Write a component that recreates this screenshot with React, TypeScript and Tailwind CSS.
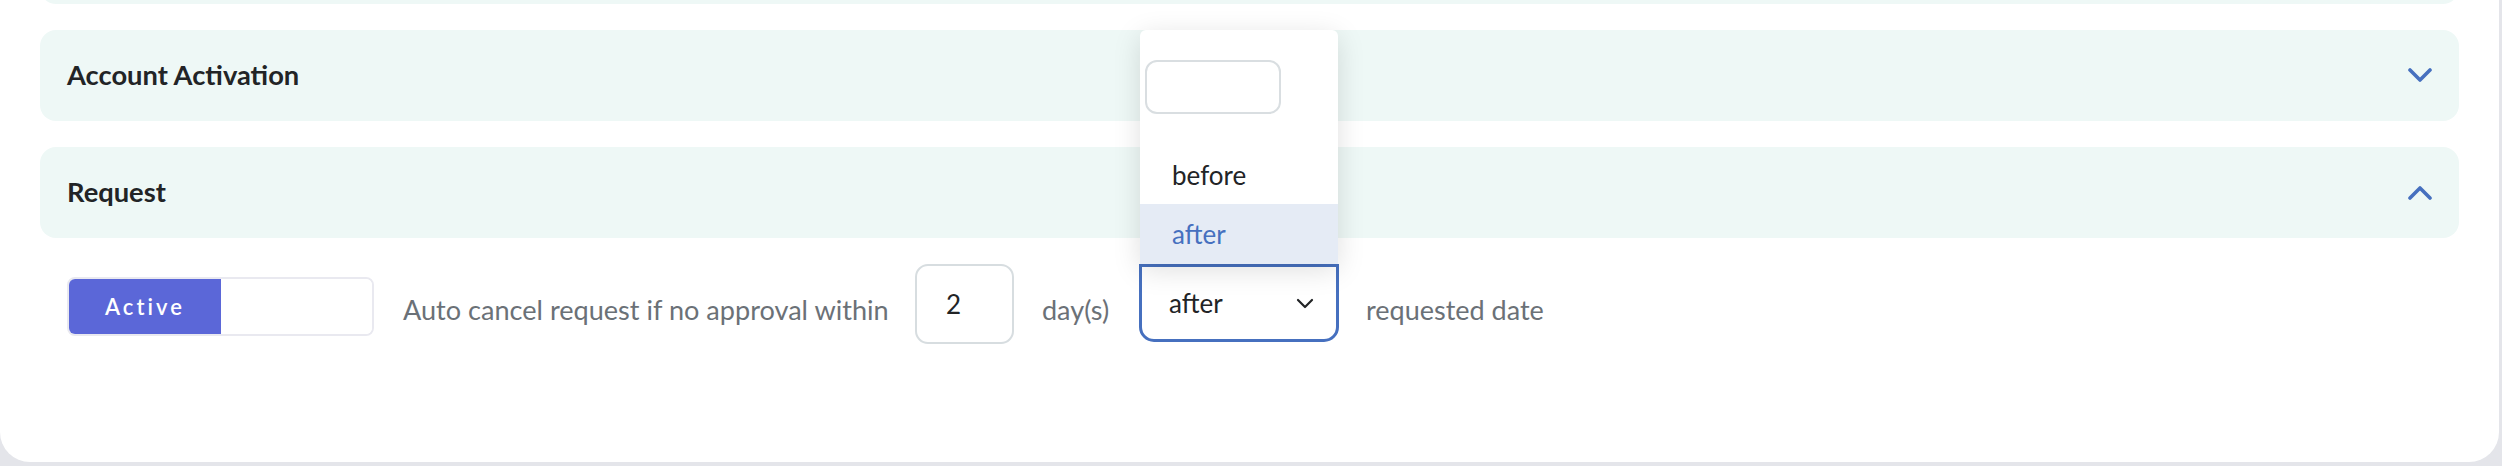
const font = { fontFamily: 'Lato, "Open Sans", sans-serif' };

function Panel({ title, open }: { title: string; open?: boolean }) {
  return (
    <div className="mt-[26px] h-[91px] rounded-[16px] bg-[#eef8f6] px-[27px] flex items-center justify-between">
      <span className="text-[27.3px] font-bold text-[#222426]">{title}</span>
      <svg width="24" height="15" viewBox="0 0 24 15" fill="none">
        <polyline
          points={open ? '2,13 12,3 22,13' : '2,2 12,12 22,2'}
          stroke="#4670bf"
          strokeWidth="3.6"
          strokeLinecap="round"
          strokeLinejoin="round"
        />
      </svg>
    </div>
  );
}

export default function App() {
  return (
    <div className="w-full h-[466px] bg-[#e4e5ea] overflow-hidden" style={font}>
      <div className="w-[2499px] h-[462px] bg-white rounded-b-[30px] px-[40px]">
        {/* previous section, scrolled mostly out of view */}
        <div className="h-[4px] overflow-hidden">
          <div className="-mt-[87px] h-[91px] rounded-[16px] bg-[#eef8f6]" />
        </div>

        <Panel title="Account Activation" />
        <Panel title="Request" open />

        {/* request settings row */}
        <div className="mt-[26px] h-[80px] pl-[27px] flex items-center">
          <div className="w-[307px] h-[59px] border-2 border-[#e9e9f0] rounded-[8px] flex overflow-hidden mt-[5px]">
            <div className="w-[152px] h-full bg-[#5b67d8] flex items-center justify-center text-white text-[22px] font-semibold tracking-[0.14em]">
              Active
            </div>
            <div className="flex-1 bg-white" />
          </div>

          <span className="ml-[29px] mt-[12px] w-[486px] text-[27.1px] text-[#6b7177] whitespace-nowrap">
            Auto cancel request if no approval within
          </span>

          <div className="ml-[26px] w-[99px] h-[80px] border-[2.5px] border-[#d7dde0] rounded-[13px] flex items-center pl-[29px] text-[26px] text-[#222426]">
            2
          </div>

          <span className="ml-[28px] mt-[12px] w-[69px] text-[27px] text-[#6b7177]">day(s)</span>

          <div className="relative ml-[28px] w-[200px] h-[78px] -mt-[2px]">
            {/* open dropdown menu */}
            <div className="absolute bottom-full left-[1px] w-[198px] h-[234px] bg-white rounded-t-[6px] shadow-[0_6px_28px_rgba(0,0,0,0.13)] flex flex-col">
              <div className="mt-[30px] ml-[5px] w-[136px] h-[54px] border-2 border-[#d9dee1] rounded-[12px] bg-white" />
              <div className="mt-[32px] h-[58px] flex items-center pl-[32px] text-[26px] text-[#222426]">before</div>
              <div className="h-[60px] bg-[#e5ebf5] flex items-center pl-[32px] text-[26px] text-[#4670bf]">after</div>
            </div>
            <div className="w-full h-full border-[3px] border-[#4670bf] rounded-b-[15px] bg-white flex items-center justify-between pl-[27px] pr-[22px] text-[26px] text-[#222426]">
              <span>after</span>
              <svg width="18" height="11" viewBox="0 0 18 11" fill="none">
                <polyline points="2,2 9,9 16,2" stroke="#222426" strokeWidth="2.2" strokeLinecap="round" strokeLinejoin="round" />
              </svg>
            </div>
          </div>

          <span className="ml-[27px] mt-[12px] text-[27px] text-[#6b7177] whitespace-nowrap">requested date</span>
        </div>
      </div>
    </div>
  );
}
